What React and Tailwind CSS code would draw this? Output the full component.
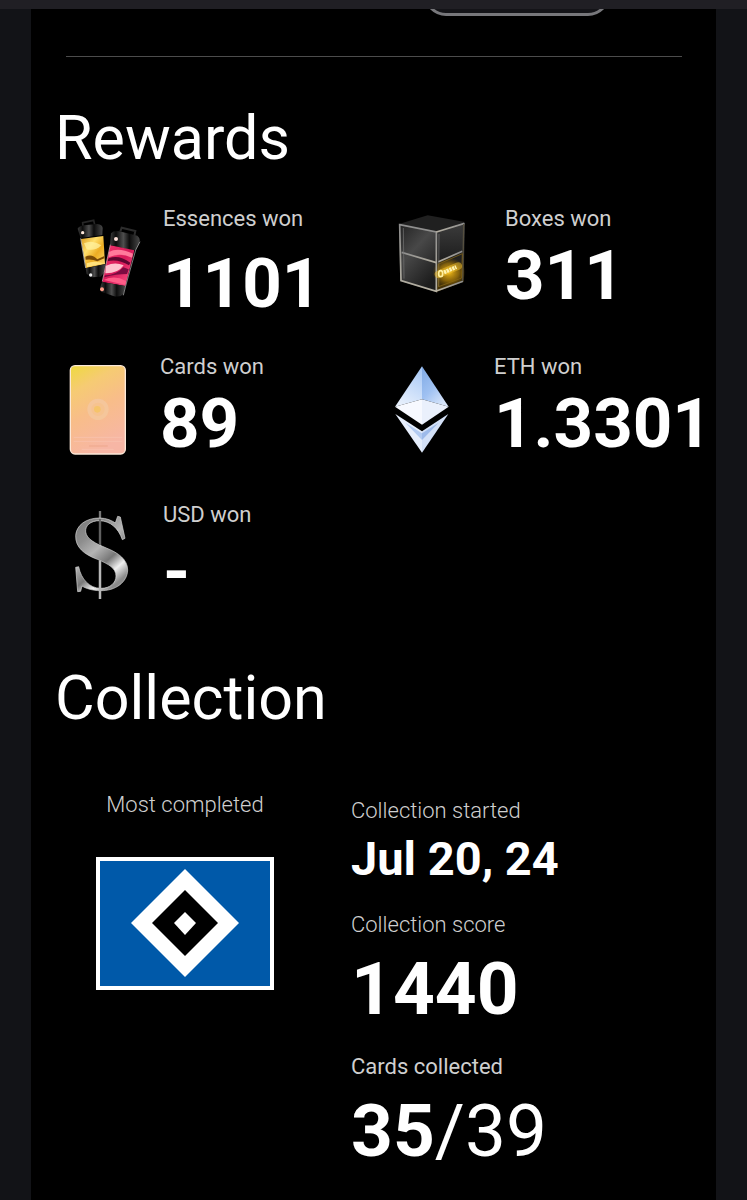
import React from "react";

const EssencesIcon = () => (
  <svg width="82" height="100" viewBox="27 6 246 300" aria-hidden="true">
    <defs>
      <linearGradient id="gold" x1="0" y1="0" x2="1" y2="1">
        <stop offset="0" stopColor="#d9981a" />
        <stop offset="0.35" stopColor="#ffdf6c" />
        <stop offset="0.6" stopColor="#edac22" />
        <stop offset="1" stopColor="#ffe07a" />
      </linearGradient>
      <linearGradient id="pink" x1="0" y1="0" x2="1" y2="1">
        <stop offset="0" stopColor="#f5386f" />
        <stop offset="0.5" stopColor="#d81a5a" />
        <stop offset="1" stopColor="#ff5c8c" />
      </linearGradient>
      <linearGradient id="cap" x1="0" y1="0" x2="1" y2="0">
        <stop offset="0" stopColor="#3c3c3c" />
        <stop offset="0.2" stopColor="#0c0c0c" />
        <stop offset="0.45" stopColor="#4e4e4e" />
        <stop offset="0.65" stopColor="#0c0c0c" />
        <stop offset="1" stopColor="#484848" />
      </linearGradient>
    </defs>
    <path d="M69 66 L68 56 L101 49 L104 62" fill="none" stroke="#262626" strokeWidth="5" />
    <path d="M53 74 Q58 66 72 64 L112 60 Q127 62 128 72 L127 93 L62 102 Z" fill="url(#cap)" />
    <path d="M63 105 L130 96 L135 180 L78 192 Z" fill="url(#gold)" />
    <path d="M72 118 Q98 106 124 124 Q106 142 80 136 Z" fill="#fff2a0" opacity="0.75" />
    <path d="M76 158 Q96 148 112 166 L133 156 L133 163 L112 172 Q96 164 77 167 Z" fill="#7a4a05" />
    <path d="M80 178 Q100 168 132 178 L80 190 Z" fill="#ffe27c" />
    <path d="M77 193 L135 181 L134 204 L122 218 L96 220 L80 210 Z" fill="url(#cap)" />
    <path d="M62 103 L77 192" stroke="#eee" strokeWidth="2" />
    <circle cx="68" cy="86" r="5" fill="#ffe9dc" />
    <circle cx="92" cy="213" r="5" fill="#eee" />

    <path d="M181 82 L185 71 L226 81 L223 95" fill="none" stroke="#2c2c2c" strokeWidth="6" />
    <path d="M153 88 Q162 78 178 82 L232 95 Q242 103 238 116 L228 137 L212 139 L150 122 Z" fill="url(#cap)" />
    <path d="M151 124 L223 139 L196 246 L127 234 Z" fill="url(#pink)" />
    <path d="M147 144 Q174 128 219 149 L216 161 Q180 144 146 160 Z" fill="#ff7a9c" />
    <path d="M146 163 Q176 150 211 176 L207 184 Q174 164 142 172 Z" fill="#5d0630" />
    <path d="M138 185 Q166 172 191 184 Q174 209 136 208 Z" fill="#ffc2cf" />
    <path d="M135 214 Q166 215 190 190 L206 196 L201 210 Q170 210 133 220 Z" fill="#7c0b41" />
    <path d="M131 228 Q164 212 198 231 L196 242 Z" fill="#ff5d88" />
    <path d="M127 234 L196 246 L190 270 Q180 281 160 276 L124 263 Q118 247 127 234 Z" fill="url(#cap)" />
    <path d="M240 113 L227 138 L197 246 L190 274" fill="none" stroke="#bbb" strokeWidth="2" />
    <path d="M151 122 L127 232" stroke="#eebbc6" strokeWidth="2" />
    <circle cx="168" cy="105" r="6" fill="#ffe3dc" />
    <circle cx="126" cy="256" r="6" fill="#ff9b86" />
  </svg>
);

const BoxIcon = () => (
  <svg width="99" height="100" viewBox="27 6 297 300" aria-hidden="true">
    <defs>
      <linearGradient id="boxLeft" x1="0" y1="0" x2="0.6" y2="1">
        <stop offset="0" stopColor="#222" />
        <stop offset="0.45" stopColor="#484848" />
        <stop offset="1" stopColor="#1d1d1d" />
      </linearGradient>
      <linearGradient id="boxRight" x1="0" y1="0" x2="0" y2="1">
        <stop offset="0" stopColor="#3c3c3c" />
        <stop offset="0.5" stopColor="#202020" />
        <stop offset="1" stopColor="#4a3504" />
      </linearGradient>
      <linearGradient id="frame" x1="0" y1="0" x2="0" y2="1">
        <stop offset="0" stopColor="#8d8d8d" />
        <stop offset="1" stopColor="#b5b0a2" />
      </linearGradient>
      <radialGradient id="glow">
        <stop offset="0" stopColor="#f3bb19" />
        <stop offset="0.6" stopColor="#a87a08" stopOpacity="0.7" />
        <stop offset="1" stopColor="#7a5600" stopOpacity="0" />
      </radialGradient>
    </defs>
    <path d="M42 60 L128 34 L240 54 L154 84 Z" fill="#202020" />
    <path d="M42 62 L154 84 L154 264 L46 231 Z" fill="url(#boxLeft)" />
    <path d="M154 84 L240 56 L236 233 L154 264 Z" fill="url(#boxRight)" />
    <ellipse cx="192" cy="205" rx="50" ry="44" fill="url(#glow)" />
    <g fill="none" stroke="url(#frame)" strokeWidth="5">
      <path d="M44 62 L154 84 L154 262 L48 230 Z" />
      <path d="M50 145 L154 176" />
      <path d="M154 84 L238 58" />
      <path d="M160 173 L232 142" />
      <path d="M156 260 L234 232" />
    </g>
    <path d="M236 60 L233 231" stroke="#565040" strokeWidth="4" />
    <path d="M55 72 L57 224 M162 90 L161 248" stroke="#777" strokeWidth="2" />
    <path d="M161 180 L232 149 L230 222 L161 248 Z" fill="none" stroke="#8f6c14" strokeWidth="2" />
    <path d="M160 211 L220 186" stroke="#f7c52e" strokeWidth="22" strokeLinecap="round" opacity="0.5" />
    <ellipse cx="167" cy="209" rx="6" ry="9" fill="none" stroke="#fff0a0" strokeWidth="5" />
    <path d="M177 205 L214 189" stroke="#fff3b0" strokeWidth="12" strokeDasharray="7 2" />
  </svg>
);

const CardIcon = () => (
  <svg width="79" height="110" viewBox="42 0 237 330" aria-hidden="true">
    <defs>
      <linearGradient id="card" x1="0.1" y1="0" x2="0.45" y2="1">
        <stop offset="0" stopColor="#efd844" />
        <stop offset="0.25" stopColor="#f6cb73" />
        <stop offset="0.55" stopColor="#f8bd89" />
        <stop offset="1" stopColor="#f7b6a5" />
      </linearGradient>
    </defs>
    <rect x="46" y="35" width="165" height="265" rx="14" fill="url(#card)" stroke="#fbe8d8" strokeWidth="4" />
    <circle cx="129" cy="166" r="26" fill="#f6c390" stroke="#f5c69b" strokeWidth="12" />
    <circle cx="127" cy="166" r="10" fill="#f6c46a" />
    <path d="M102 276 H158" stroke="#eda78c" strokeWidth="3" />
    <path d="M56 250 H202 M56 262 H202 M80 286 H176" stroke="#f9c5b2" strokeWidth="2" />
  </svg>
);

const EthIcon = () => (
  <svg width="88" height="110" viewBox="42 0 264 330" aria-hidden="true">
    <defs>
      <linearGradient id="ethLeft" x1="0.8" y1="0" x2="0.4" y2="1">
        <stop offset="0" stopColor="#a9c9f6" />
        <stop offset="1" stopColor="#e6effc" />
      </linearGradient>
      <linearGradient id="ethRight" x1="0" y1="0" x2="0.7" y2="1">
        <stop offset="0" stopColor="#7fa9e4" />
        <stop offset="0.55" stopColor="#9fc1f2" />
        <stop offset="1" stopColor="#d9e6fa" />
      </linearGradient>
    </defs>
    <path d="M126 37 L45 158 L126 136 Z" fill="url(#ethLeft)" />
    <path d="M126 37 L206 158 L126 136 Z" fill="url(#ethRight)" />
    <path d="M45 158 L126 136 L126 212 Z" fill="#f7f9ff" />
    <path d="M206 158 L126 136 L126 212 Z" fill="#eaf0fc" />
    <path d="M46 180 L126 232 L126 296 Z" fill="#e6eefc" />
    <path d="M205 180 L126 232 L126 296 Z" fill="#d3e0f7" />
    <path d="M76 206 L126 238 L126 258 Z" fill="#b3cbf1" />
    <path d="M176 206 L126 238 L126 258 Z" fill="#9dbaea" />
  </svg>
);

const DollarIcon = () => (
  <svg width="82" height="100" viewBox="27 9 246 300" aria-hidden="true">
    <defs>
      <linearGradient id="silver" x1="0" y1="0" x2="0.6" y2="1">
        <stop offset="0" stopColor="#777" />
        <stop offset="0.3" stopColor="#8e8e8e" />
        <stop offset="0.5" stopColor="#b5b5b5" />
        <stop offset="0.7" stopColor="#777" />
        <stop offset="0.85" stopColor="#f0f0f0" />
        <stop offset="1" stopColor="#8a8a8a" />
      </linearGradient>
    </defs>
    <path d="M120 36 V300" stroke="#777" strokeWidth="7" />
    <path
      d="M173 52 L181 54 L195 118 L187 122 C175 87 151 66 119 65 C91 65 75 80 77 99 C80 121 108 134 139 147 C176 162 203 182 203 213 C202 250 166 276 121 275 C98 275 76 268 66 261 L62 277 L53 278 L47 205 L56 203 C63 240 88 268 123 268 C151 268 168 251 168 231 C168 208 146 195 112 181 C72 166 46 145 47 110 C49 78 79 57 119 57 C140 57 156 65 166 72 Z"
      fill="url(#silver)"
      stroke="#d6d6d6"
      strokeWidth="2"
    />
    <path d="M120 186 V300" stroke="#b8b8b8" strokeWidth="7" />
    <path d="M120 60 V138" stroke="#5c5c5c" strokeWidth="5" />
  </svg>
);

const ClubCrest = () => (
  <svg width="178" height="133" viewBox="0 0 178 133" role="img" aria-label="Club crest">
    <rect width="178" height="133" fill="#fff" />
    <rect x="4" y="4" width="170" height="125" fill="#0059a9" />
    <path d="M89 12 L143 66 L89 120 L35 66 Z" fill="#fff" />
    <path d="M89 33 L122 66 L89 99 L56 66 Z" fill="#000" />
    <path d="M89 55 L100 66 L89 78 L78 66 Z" fill="#fff" />
  </svg>
);

const rewards = [
  { label: "Essences won", value: "1101", icon: <EssencesIcon />, text: "gap-4" },
  { label: "Boxes won", value: "311", icon: <BoxIcon />, text: "gap-2" },
  { label: "Cards won", value: "89", icon: <CardIcon />, text: "gap-2" },
  { label: "ETH won", value: "1.3301", icon: <EthIcon />, text: "gap-2" },
  { label: "USD won", value: "-", icon: <DollarIcon />, text: "gap-2" },
];

const Reward = ({ label, value, icon, text }) => (
  <div className="flex h-[148px] items-start gap-3">
    <div className="shrink-0">{icon}</div>
    <dl className={`flex flex-col ${text}`}>
      <dt className="whitespace-nowrap text-[22px] leading-[26px] text-[#cfcfcf]">{label}</dt>
      <dd className="text-[69px] font-bold leading-[72px]">{value}</dd>
    </dl>
  </div>
);

const App = () => {
  return (
    <div className="min-h-screen bg-[#121317] font-['Roboto',sans-serif] text-white">
      <div className="h-[9px] bg-[#201f24]" />
      <main className="mx-[31px] min-h-[calc(100vh-9px)] bg-black pb-6">
        <div className="flex h-[7px] items-end justify-end overflow-hidden pr-[106px]">
          <button
            type="button"
            aria-label="Share"
            className="h-12 w-[186px] shrink-0 rounded-[22px] border-[3px] border-[#77777b] bg-[#141418]"
          />
        </div>
        <hr className="ml-[35px] mr-[34px] mt-10 border-[#4c4c4c]" />

        <section className="pt-[45px]">
          <h2 className="pl-6 text-[61px] leading-[72px]">Rewards</h2>
          <div className="grid grid-cols-[325px_1fr] pl-[38px] pt-8">
            {rewards.map((r) => (
              <Reward key={r.label} {...r} />
            ))}
          </div>
        </section>

        <section className="pt-3">
          <h2 className="pl-6 text-[61px] leading-[72px]">Collection</h2>
          <div className="flex pt-[59px]">
            <div className="flex w-[308px] shrink-0 flex-col items-center gap-10">
              <p className="text-[22px] font-light leading-6 text-[#cfcfcf]">Most completed</p>
              <ClubCrest />
            </div>
            <dl className="flex flex-col gap-[30px] pl-3 pt-[6px]">
              <div className="flex flex-col gap-3">
                <dt className="text-[22px] font-light leading-6 text-[#cfcfcf]">Collection started</dt>
                <dd className="text-[47px] font-bold leading-[48px]">Jul 20, 24</dd>
              </div>
              <div className="flex flex-col gap-4">
                <dt className="text-[22px] font-light leading-6 text-[#cfcfcf]">Collection score</dt>
                <dd className="text-[73px] font-bold leading-[72px]">1440</dd>
              </div>
              <div className="flex flex-col gap-4">
                <dt className="text-[22px] leading-6 text-[#cfcfcf]">Cards collected</dt>
                <dd className="text-[73px] leading-[72px]">
                  <span className="font-bold">35</span>
                  <span>/39</span>
                </dd>
              </div>
            </dl>
          </div>
        </section>
      </main>
    </div>
  );
};

export default App;
